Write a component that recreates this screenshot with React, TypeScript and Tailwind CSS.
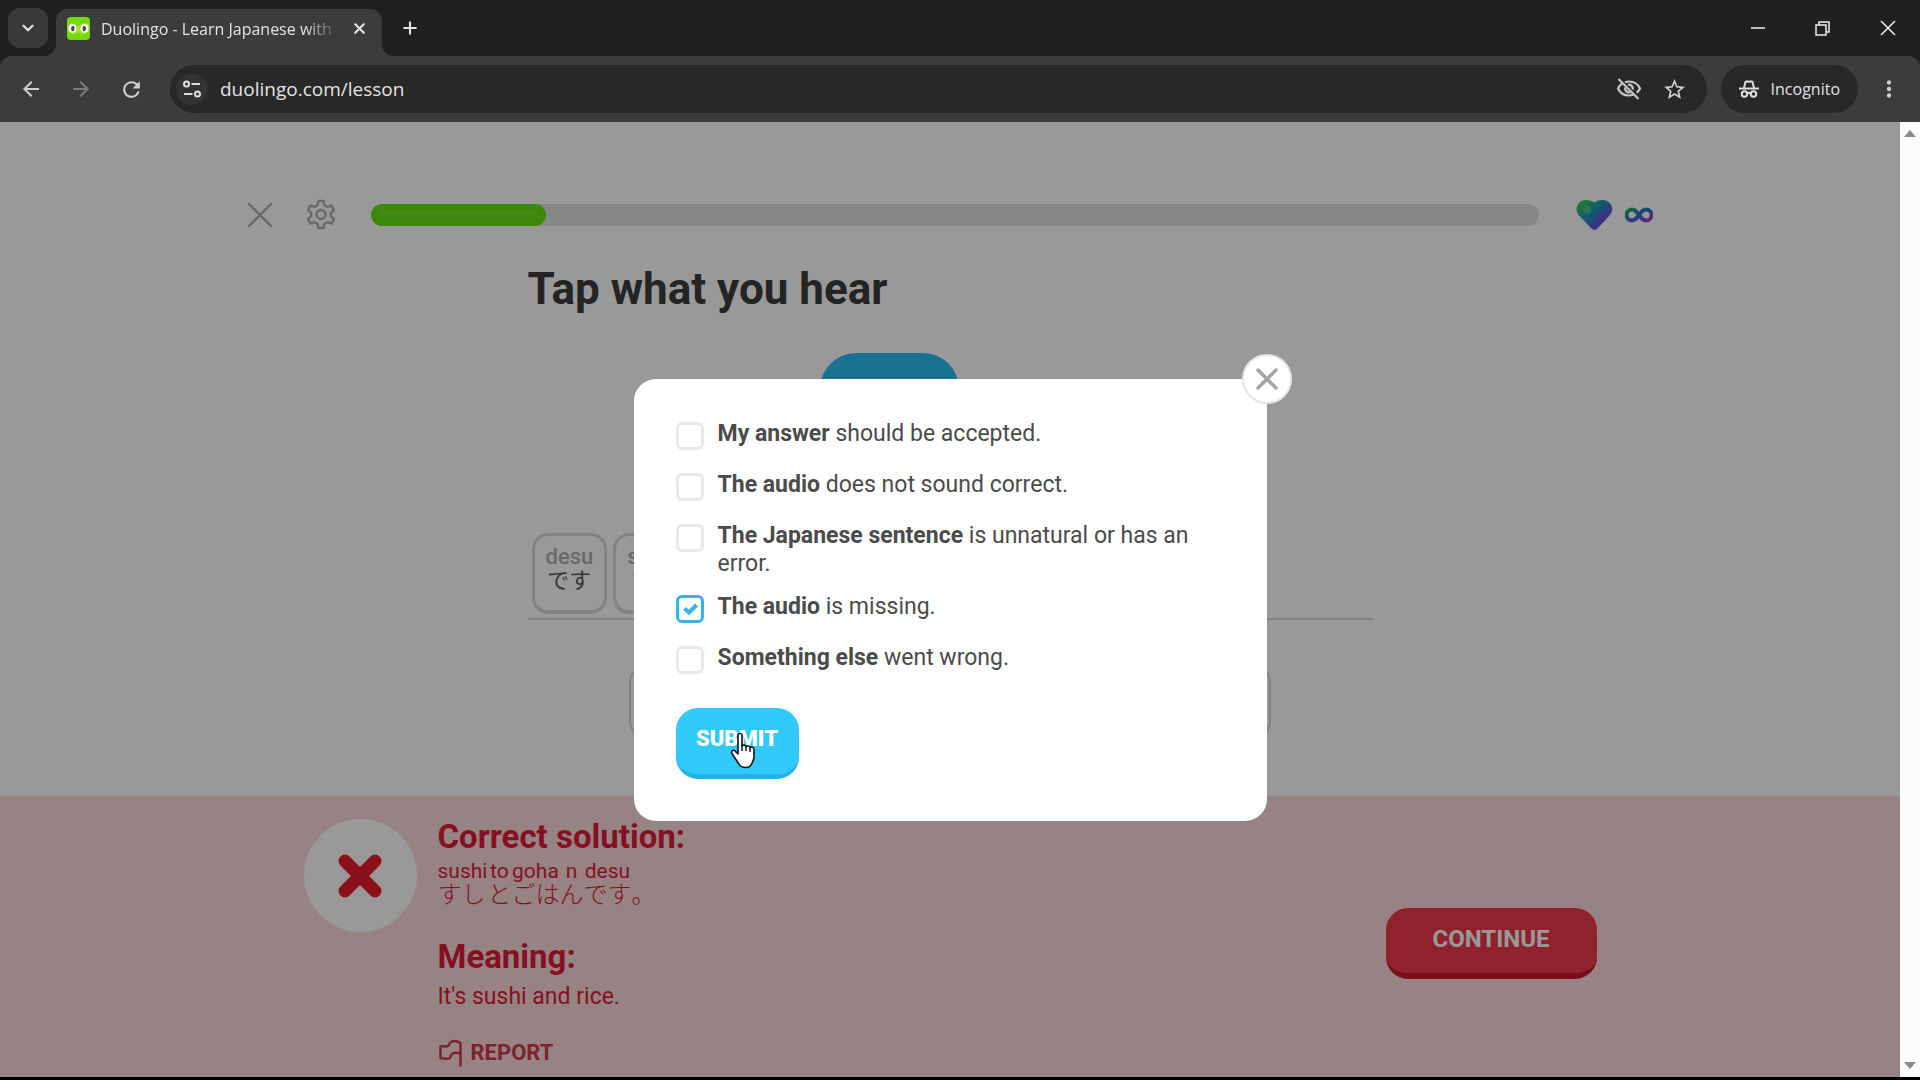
import React, { useState } from 'react';
import { ChevronDown, Plus, X } from 'lucide-react';
import { MdArrowBack, MdArrowForward, MdMoreVert, MdRefresh, MdStarBorder } from 'react-icons/md';

type Option = {
  id: string;
  strong: string;
  rest: string;
};

type Word = {
  romaji: string;
  kana: string;
};

const OPTIONS: Option[] = [
  { id: 'accepted', strong: 'My answer', rest: 'should be accepted.' },
  { id: 'audio-wrong', strong: 'The audio', rest: 'does not sound correct.' },
  { id: 'unnatural', strong: 'The Japanese sentence', rest: 'is unnatural or has an error.' },
  { id: 'audio-missing', strong: 'The audio', rest: 'is missing.' },
  { id: 'other', strong: 'Something else', rest: 'went wrong.' },
];

const SOLUTION: Word[] = [
  { romaji: 'sushi', kana: 'すし' },
  { romaji: 'to', kana: 'と' },
  { romaji: 'goha', kana: 'ごは' },
  { romaji: 'n', kana: 'ん' },
  { romaji: 'desu', kana: 'です' },
];

const ANSWER: Word[] = [
  { romaji: 'desu', kana: 'です' },
  { romaji: 'sushi', kana: 'すし' },
];

function OwlIcon() {
  return (
    <svg width="23" height="23" viewBox="0 0 23 23" className="shrink-0" aria-hidden="true">
      <rect width="23" height="23" rx="4" fill="#76d80a" />
      <path d="M1 8c3-3 7-2 10.500 1C15 6 19 5 22 8v6c-3 4-8 4-10.500 1C9 18 4 18 1 14z" fill="#9ae52f" />
      <ellipse cx="5.500" cy="11.500" rx="3.800" ry="4.400" fill="#fff" />
      <ellipse cx="17.500" cy="11.500" rx="3.800" ry="4.400" fill="#fff" />
      <ellipse cx="5.800" cy="11.500" rx="1.700" ry="2.800" fill="#454545" />
      <ellipse cx="17.200" cy="11.500" rx="1.700" ry="2.800" fill="#454545" />
      <path d="M10 13h3l-1.500 2.500z" fill="#f5b800" />
    </svg>
  );
}

function TuneIcon() {
  return (
    <svg width="20" height="20" viewBox="0 0 20 20" fill="none" stroke="#dedede" strokeWidth="2" aria-hidden="true">
      <circle cx="4.500" cy="5" r="2.500" />
      <path d="M9.500 5H18M2 15h8.500" />
      <circle cx="15.500" cy="15" r="2.500" />
    </svg>
  );
}

function EyeOffIcon() {
  return (
    <svg width="26" height="24" viewBox="0 0 26 24" fill="none" stroke="#c8c8c8" strokeWidth="2.200" aria-hidden="true">
      <path d="M9 5.200A12 12 0 0 1 13 4.500c5 0 9 2.700 11 7-.8 1.700-1.900 3.100-3.300 4.200M17 17.800a12 12 0 0 1-4 .700c-5 0-9-2.700-11-7 .900-2 2.200-3.600 4-4.800" />
      <path d="M12 7.800a4 4 0 0 1 4.800 4.700M9.200 10.500a4 4 0 0 0 5 4.800" />
      <path d="M2.500 2l20 20" />
    </svg>
  );
}

function IncognitoIcon() {
  return (
    <svg width="20" height="20" viewBox="0 0 22 20" fill="none" stroke="#dedede" strokeWidth="2.200" aria-hidden="true">
      <path d="M0 9.500h22" />
      <path d="M5.500 9l1.700-7 1.800-.500 2 .700 2-.700 1.800.500 1.700 7" />
      <circle cx="6" cy="15.500" r="3" />
      <circle cx="16" cy="15.500" r="3" />
      <path d="M9 15c1.200-.900 2.800-.900 4 0" />
    </svg>
  );
}

function GearIcon() {
  return (
    <svg width="32" height="32" viewBox="0 0 32 32" fill="none" stroke="#afafaf" strokeWidth="2.400" strokeLinejoin="round" aria-hidden="true">
      <path d="M13.500 2h5l1 4.200 2.800 1.600 4.200-1.300 2.500 4.300-3.100 3v3.400l3.100 3-2.500 4.300-4.200-1.300-2.800 1.600-1 4.200h-5l-1-4.200-2.800-1.600-4.200 1.300L3 20.200l3.100-3v-3.400L3 10.800l2.500-4.300 4.200 1.300 2.800-1.600z" />
      <circle cx="16" cy="15.500" r="4.500" />
    </svg>
  );
}

function HeartIcon() {
  return (
    <svg width="38" height="32" viewBox="0 0 38 32" aria-hidden="true">
      <defs>
        <linearGradient id="heart" x1="0" y1="0" x2="1" y2="1">
          <stop offset="0.150" stopColor="#2cc85a" />
          <stop offset="0.450" stopColor="#2191c4" />
          <stop offset="0.650" stopColor="#5a5ad8" />
          <stop offset="0.950" stopColor="#9a45d8" />
        </linearGradient>
      </defs>
      <path d="M19.500 3.500C23 .500 29.500.200 33.500 3c4.500 3.300 5 9 1.500 13L22.500 29.500c-2 2-4 2-6 0L4 16.500C.500 12.500 1 6.500 5 3c4-3 10.500-2.500 14.500.500z" fill="url(#heart)" />
      <circle cx="12" cy="11" r="4" fill="#6ce0a0" opacity="0.450" />
    </svg>
  );
}

function InfinityIcon() {
  return (
    <svg width="28" height="16" viewBox="0 0 28 16" fill="none" aria-hidden="true">
      <defs>
        <linearGradient id="infinity" x1="0" y1="0" x2="1" y2="1">
          <stop offset="0" stopColor="#22b45c" />
          <stop offset="0.450" stopColor="#2b74c8" />
          <stop offset="1" stopColor="#a93fc9" />
        </linearGradient>
      </defs>
      <path
        d="M14 8c-2.500-3.500-4-5.500-7-5.500a5.500 5.500 0 0 0 0 11c3 0 4.500-2 7-5.500s4-5.500 7-5.500a5.500 5.500 0 0 1 0 11c-3 0-4.500-2-7-5.500z"
        stroke="url(#infinity)"
        strokeWidth="4"
      />
    </svg>
  );
}

function FlagIcon() {
  return (
    <svg width="25" height="28" viewBox="0 0 25 28" fill="none" stroke="#d23a50" strokeWidth="2.500" strokeLinejoin="round" strokeLinecap="round" aria-hidden="true">
      <path d="M22.500 26.500V4c-3-1.800-7-2.300-9.500-1-1.800 1-1.800 4-3.500 4.300C7.200 7.700 5 6.800 2.500 7.500v11.800c2.500-.600 5.500 1 8.500.200 2-.600 1.500-4 3.300-5 2.200-1.200 5.200-1 8.200 0" />
    </svg>
  );
}

function HandCursor() {
  return (
    <svg width="26" height="37" viewBox="0 0 26 37" aria-hidden="true">
      <path
        d="M8 3.500C8 .800 12 .800 12 3.500V14c.500-1.500 3.800-1.200 4 .800.800-1.300 3.600-1 4 1 1-1.200 4-.700 4 2V25c0 3-1.500 5-2.500 7-1 2.500-2.500 3.500-5.500 3.500s-6-1-7.500-4C6.500 28 4 25 2 21.500c-1.500-2.700 1.500-4.200 3.300-2.300L8 22z"
        fill="#fff"
        stroke="#151515"
        strokeWidth="1.600"
        strokeLinejoin="round"
      />
      <path d="M12 13v6M16 14v5M20 15.500V20" stroke="#151515" strokeWidth="1.400" />
    </svg>
  );
}

function TabStrip() {
  return (
    <div className="flex h-14 shrink-0 items-end bg-[#202020] pl-2">
      <button className="mb-2 flex size-10 items-center justify-center rounded-xl bg-[#393939] text-[#e3e3e3]" aria-label="Search tabs">
        <ChevronDown size={18} strokeWidth={3} />
      </button>
      <div className="relative ml-2 flex h-[47px] w-[326px] items-center rounded-t-xl bg-[#3c3c3c] pr-[11px] pb-2 pl-[11px]">
        <svg width="12" height="12" viewBox="0 0 12 12" className="absolute bottom-0 -left-3" fill="#3c3c3c" aria-hidden="true">
          <path d="M12 0v12H0A12 12 0 0 0 12 0z" />
        </svg>
        <svg width="12" height="12" viewBox="0 0 12 12" className="absolute -right-3 bottom-0" fill="#3c3c3c" aria-hidden="true">
          <path d="M0 0v12h12A12 12 0 0 1 0 0z" />
        </svg>
        <OwlIcon />
        <span className="ml-[11px] flex-1 overflow-hidden text-[16px] whitespace-nowrap text-[#e3e3e3] [mask-image:linear-gradient(to_right,black_85%,transparent)]">
          Duolingo - Learn Japanese with
        </span>
        <button className="ml-2 flex size-6 items-center justify-center text-[#e3e3e3]" aria-label="Close tab">
          <X size={17} strokeWidth={3} />
        </button>
      </div>
      <button className="mb-4 ml-4 flex size-6 items-center justify-center text-[#e3e3e3]" aria-label="New tab">
        <Plus size={20} strokeWidth={2.5} />
      </button>
      <div className="ml-auto flex h-14 items-center text-[#eeeeee]">
        <button className="flex w-[65px] justify-center" aria-label="Minimize">
          <svg width="14" height="14" viewBox="0 0 14 14" stroke="currentColor" strokeWidth="1.500">
            <path d="M0 7h14" />
          </svg>
        </button>
        <button className="flex w-[65px] justify-center" aria-label="Restore">
          <svg width="15" height="15" viewBox="0 0 15 15" fill="none" stroke="currentColor" strokeWidth="1.500">
            <path d="M1 4h10v10H1zM4 4V1h10v10h-3" />
          </svg>
        </button>
        <button className="flex w-[65px] justify-center" aria-label="Close window">
          <svg width="16" height="16" viewBox="0 0 16 16" stroke="currentColor" strokeWidth="1.500">
            <path d="M1 1l14 14M15 1L1 15" />
          </svg>
        </button>
      </div>
    </div>
  );
}

function Toolbar() {
  return (
    <div className="shrink-0 bg-[#202020]">
      <div className="flex h-[66px] items-center rounded-t-xl bg-[#3c3c3c] pr-[18px] pl-[19px]">
        <button className="text-[#d0d0d0]" aria-label="Back">
          <MdArrowBack size={24} />
        </button>
        <button className="ml-[26px] text-[#7d7d7d]" aria-label="Forward">
          <MdArrowForward size={24} />
        </button>
        <button className="ml-[26px] text-[#d0d0d0]" aria-label="Reload">
          <MdRefresh size={25} />
        </button>
        <div className="ml-[26px] flex h-12 flex-1 items-center rounded-full bg-[#282828] pr-5 pl-1.5">
          <button className="flex size-8 items-center justify-center rounded-full bg-[#333333]" aria-label="Site information">
            <TuneIcon />
          </button>
          <input
            className="ml-3 min-w-0 flex-1 bg-transparent text-[19px] text-[#e3e3e3] outline-none"
            aria-label="Address"
            defaultValue="duolingo.com/lesson"
          />
          <button aria-label="Third-party cookies blocked">
            <EyeOffIcon />
          </button>
          <button className="ml-5 text-[#d0d0d0]" aria-label="Bookmark this tab">
            <MdStarBorder size={25} />
          </button>
        </div>
        <button className="ml-3.5 flex h-12 items-center gap-3 rounded-full bg-[#282828] px-[18px] text-[16px] text-[#e3e3e3]">
          <IncognitoIcon />
          Incognito
        </button>
        <button className="ml-[18px] text-[#d0d0d0]" aria-label="Menu">
          <MdMoreVert size={26} />
        </button>
      </div>
    </div>
  );
}

function LessonHeader() {
  return (
    <header className="mx-auto flex w-full max-w-[1406px] items-center pt-[77px]">
      <button aria-label="Quit lesson">
        <svg width="26" height="32" viewBox="0 0 26 32" stroke="#afafaf" strokeWidth="2.400" strokeLinecap="round">
          <path d="M2 5l22 22M24 5L2 27" />
        </svg>
      </button>
      <button className="ml-8" aria-label="Settings">
        <GearIcon />
      </button>
      <div className="ml-[34px] h-[22px] flex-1 overflow-hidden rounded-full bg-[#e1e1e1]" role="progressbar" aria-label="Lesson progress" aria-valuenow={15}>
        <div className="h-full w-[15%] rounded-full bg-[#64e310] px-2 pt-1.5">
          <div className="h-1.5 rounded-full bg-[#72e728]" />
        </div>
      </div>
      <div className="ml-9 flex items-center gap-3">
        <HeartIcon />
        <InfinityIcon />
      </div>
    </header>
  );
}

function Challenge() {
  return (
    <section className="mx-auto w-full max-w-[845px]">
      <h1 className="mt-8 text-[44px] leading-[52px] font-bold text-[#3c3c3c]">Tap what you hear</h1>
      <div className="mt-[38px] flex justify-center pr-[121px]">
        <button className="h-[130px] w-[139px] rounded-[36px] bg-[#2cbef4]" aria-label="Play audio" />
      </div>
      <div className="mt-[50px] flex gap-1.5 border-b-2 border-[#d8d8d8] px-1 pb-1">
        {ANSWER.map((word) => (
          <button
            key={word.romaji}
            className="h-[81px] rounded-2xl border-[3px] border-b-4 border-[#dadada] px-[11px] pb-2 text-center text-[22px] leading-6"
          >
            <span className="block font-medium text-[#afafaf]">{word.romaji}</span>
            <span className="block text-[#5a5a5a]">{word.kana}</span>
          </button>
        ))}
      </div>
      <div className="mx-auto mt-[46px] h-[72px] w-full max-w-[642px] rounded-2xl border-2 border-b-4 border-[#d8d8d8]" />
    </section>
  );
}

function ResultFooter() {
  return (
    <footer className="mt-auto bg-[#fcd9dc] px-6 pt-[23px] pb-2.5 text-[#e01c38]">
      <div className="mx-auto flex w-full max-w-[1293px] items-start">
        <div className="flex size-[113px] shrink-0 items-center justify-center rounded-full bg-white">
          <svg width="46" height="46" viewBox="0 0 46 46" stroke="#ea1c2c" strokeWidth="13" strokeLinecap="round" aria-hidden="true">
            <path d="M8 8l30 30M38 8L8 38" />
          </svg>
        </div>
        <div className="ml-[21px] flex-1">
          <h2 className="text-[33px] leading-9 font-bold">Correct solution:</h2>
          <div className="mt-1 flex">
            {SOLUTION.map((word) => (
              <div key={word.romaji}>
                <div className="text-center text-[21px] leading-6">{word.romaji}</div>
                <div className="text-2xl leading-6 font-light">{word.kana}</div>
              </div>
            ))}
            <div className="self-end text-2xl leading-6 font-light">。</div>
          </div>
          <h2 className="mt-8 text-[33px] leading-9 font-bold">Meaning:</h2>
          <p className="mt-2 text-[23px] leading-7">It's sushi and rice.</p>
          <button className="mt-7 flex items-center gap-2 text-[22px] leading-7 font-bold text-[#d23a50]">
            <FlagIcon />
            REPORT
          </button>
        </div>
        <button className="mt-[89px] h-[71px] w-[211px] rounded-[22px] border-b-[6px] border-[#cf1830] bg-[#f13a4c] pb-1 text-[24px] font-bold text-white">
          CONTINUE
        </button>
      </div>
    </footer>
  );
}

function ReportDialog() {
  const [checked, setChecked] = useState<string[]>(['audio-missing']);

  const toggle = (id: string) => {
    setChecked((prev) => (prev.includes(id) ? prev.filter((item) => item !== id) : [...prev, id]));
  };

  return (
    <div className="absolute inset-0 flex items-center justify-center bg-black/40">
      <div role="dialog" aria-label="Report a problem" className="relative w-full max-w-[633px] rounded-[22px] bg-white px-[42px] pt-[41px] pb-[42px]">
        <button
          className="absolute -top-[25px] -right-[25px] flex size-[50px] items-center justify-center rounded-full border-2 border-[#e5e5e5] bg-white text-[#a5a5a5]"
          aria-label="Close"
        >
          <svg width="22" height="22" viewBox="0 0 22 22" stroke="currentColor" strokeWidth="3.500" strokeLinecap="round">
            <path d="M2 2l18 18M20 2L2 20" />
          </svg>
        </button>
        <div className="flex flex-col gap-[15px]">
          {OPTIONS.map((option) => (
            <label key={option.id} className="flex min-h-9 items-start gap-[14px] text-[23px] leading-7 text-[#4b4b4b]">
              <span className="relative mt-0.5 size-7 shrink-0">
                <input
                  type="checkbox"
                  className="block size-7 appearance-none rounded-md border-[3px] border-[#e8e8e8] bg-white checked:border-[#35b4e5]"
                  checked={checked.includes(option.id)}
                  onChange={() => toggle(option.id)}
                />
                {checked.includes(option.id) && (
                  <svg viewBox="0 0 28 28" className="pointer-events-none absolute inset-0" fill="none" stroke="#35b4e5" strokeWidth="4">
                    <path d="M8.500 13.500l4.500 4 7.500-7.500" />
                  </svg>
                )}
              </span>
              <span>
                <b className="font-bold">{option.strong}</b> {option.rest}
              </span>
            </label>
          ))}
        </div>
        <div className="relative mt-7 w-fit">
          <button className="block h-[71px] w-[123px] rounded-[22px] border-b-[5px] border-[#1fb4ea] bg-[#31c9fa] pb-1 text-[22px] font-black text-white">
            SUBMIT
          </button>
          <div className="pointer-events-none absolute top-6 left-[54px]">
            <HandCursor />
          </div>
        </div>
      </div>
    </div>
  );
}

function Scrollbar() {
  return (
    <div className="flex w-5 shrink-0 flex-col items-center justify-between bg-[#fcfcfc] py-2">
      <svg width="12" height="8" viewBox="0 0 12 8" fill="#8b8b8b" aria-hidden="true">
        <path d="M6 0l6 7H0z" />
      </svg>
      <svg width="12" height="8" viewBox="0 0 12 8" fill="#8b8b8b" aria-hidden="true">
        <path d="M6 8l6-7H0z" />
      </svg>
    </div>
  );
}

export default function App() {
  return (
    <div className="flex h-screen flex-col border-b-[3px] border-black bg-white font-['Open_Sans','Noto_Sans',sans-serif]">
      <TabStrip />
      <Toolbar />
      <div className="flex min-h-0 flex-1">
        <main className="relative flex flex-1 flex-col overflow-hidden font-[Roboto,'Noto_Sans_CJK_JP',sans-serif]">
          <LessonHeader />
          <Challenge />
          <ResultFooter />
          <ReportDialog />
        </main>
        <Scrollbar />
      </div>
    </div>
  );
}
